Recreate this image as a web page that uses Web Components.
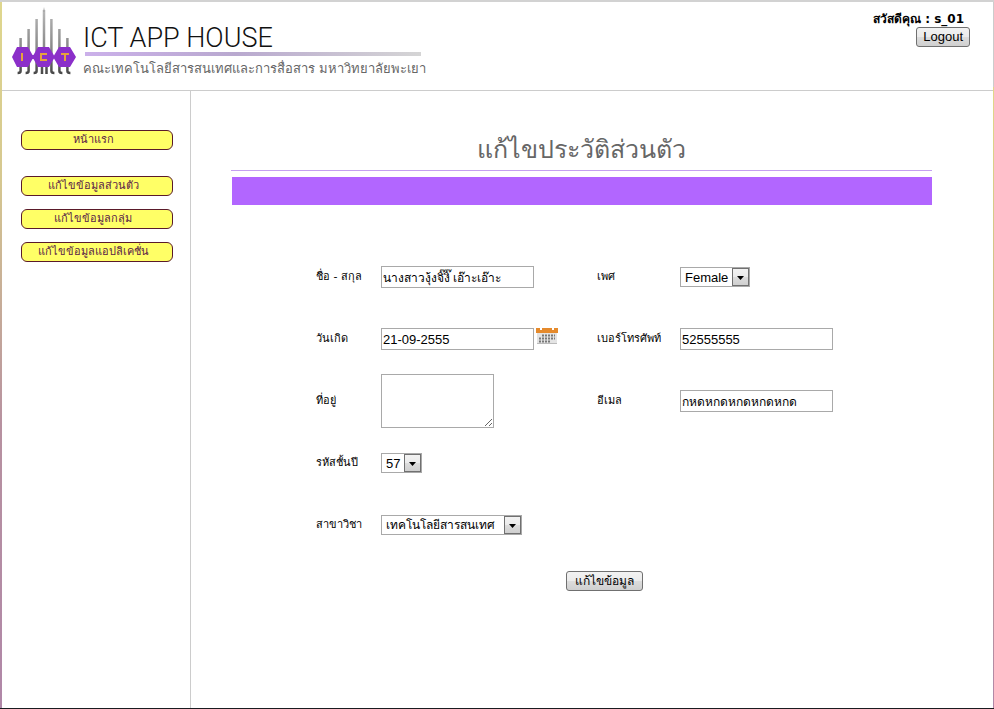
<!DOCTYPE html>
<html lang="th">
<head>
<meta charset="utf-8">
<title>ICT App House</title>
<style>
body { margin: 0; background: #fff; color: #000; font-family: "DejaVu Sans", sans-serif; font-size: 11px; }
</style>
</head>
<body>
<app-shell>
  <site-header slot="header" user="s_01"></site-header>
  <side-nav slot="nav">
    <nav-item class="home">หน้าแรก</nav-item>
    <nav-item>แก้ไขข้อมูลส่วนตัว</nav-item>
    <nav-item>แก้ไขข้อมูลกลุ่ม</nav-item>
    <nav-item>แก้ไขข้อมูลแอปลิเคชั่น</nav-item>
  </side-nav>
  <page-title>แก้ไขประวัติส่วนตัว</page-title>
  <profile-form></profile-form>
</app-shell>

<script>
const define = (name, html, setup) => customElements.define(name, class extends HTMLElement {
  constructor() {
    super();
    this.attachShadow({ mode: 'open' }).innerHTML = html;
  }
  connectedCallback() { if (setup) setup(this, this.shadowRoot); }
});

define('app-shell', `
<style>
  :host { display: flex; flex-direction: column; box-sizing: border-box; min-height: 100vh; position: relative;
    border-top: 2px solid #d2d2d2; border-bottom: 1px solid #1a1c20; }
  .body { display: flex; flex: 1; }
  aside { flex: 0 0 190px; box-sizing: border-box; border-right: 1px solid #ccc; margin-left: 1px; }
  main { flex: 1; min-width: 0; padding: 39px 62px 0 40px; }
  .edge { position: absolute; top: 0; bottom: 0; width: 2px; }
  .left { left: 0; background: linear-gradient(#dfd78e, #d6c890 25%, #b791a0 60%, #b087a8); }
  .right { right: 0; width: 1px; background: linear-gradient(#ccc 12%, #e0d888 12%, #ccb888 50%, #b087a8); }
</style>
<slot name="header"></slot>
<div class="body">
  <aside><slot name="nav"></slot></aside>
  <main><slot></slot></main>
</div>
<div class="edge left"></div><div class="edge right"></div>`);

define('site-header', `
<style>
  :host { display: flex; justify-content: space-between; box-sizing: border-box; min-height: 89px;
    padding: 5px 24px 0 11px; border-bottom: 1px solid #ccc; }
  .brand { display: flex; gap: 7px; }
  .names { padding-top: 16px; }
  h1 { margin: 0; font: 300 27px/30px Roboto, sans-serif; color: #111; }
  .bar { height: 4px; width: 336px; margin: -1px 0 3px 2px; background: linear-gradient(90deg, #cbb0ea, #b9a9cf 45%, #d5d5d5); }
  p { margin: 0; font: 300 13px/20px "DejaVu Sans", sans-serif; color: #666; white-space: nowrap; }
  .account { display: flex; flex-direction: column; align-items: flex-end; padding-top: 5px; }
  strong { font-size: 12px; line-height: 14px; margin: 0 6px 1px 0; }
  button { font: 13px/16px "Liberation Sans", Arial, sans-serif; padding: 1px 6px; border: 1px solid #707070; border-radius: 3px;
    background: linear-gradient(#f2f2f2, #ebebeb 50%, #ddd 50%, #cfcfcf); color: #000; }
</style>
<div class="brand">
  <svg width="65" height="70" viewBox="0 0 65 70" aria-label="ICT">
    <defs><linearGradient id="s" gradientUnits="userSpaceOnUse" x1="0" y1="0" x2="0" y2="68"><stop offset="0" stop-color="#bbb"/><stop offset=".6" stop-color="#888"/><stop offset="1" stop-color="#444"/></linearGradient></defs>
    <g fill="none" stroke="url(#s)" stroke-width="2.500">
      <path d="M9.600 31V64q0 2-3 2M17.600 22V64q0 2-3 2M25.600 12V64q0 2-3 2"/>
      <path d="M40.400 12V64q0 2 3 2M48.400 22V64q0 2 3 2M56.400 31V64q0 2 3 2"/>
      <path d="M33 3V48M31 58V67M35.500 58V67"/>
    </g>
    <path fill="#aaa" d="M32 5L33 0L34 5Z"/>
    <path fill="#8b2fc9" d="M6 40H17L21.500 48H22.500L27 40H38L43 48.500 48 40H59L65 50 59 60H48L43 51.500 38 60H27L22.500 52H21.500L17 60H6L1 50Z"/>
    <g fill="none" stroke="#e6a33c" stroke-width="2"><path d="M11 46v8M36 47h-6v6h6M50 47h8M54 47v7"/></g>
  </svg>
  <div class="names">
    <h1>ICT APP HOUSE</h1>
    <div class="bar"></div>
    <p>คณะเทคโนโลยีสารสนเทศและการสื่อสาร มหาวิทยาลัยพะเยา</p>
  </div>
</div>
<div class="account">
  <strong>สวัสดีคุณ : <span></span></strong>
  <button type="button">Logout</button>
</div>`, (el, root) => { root.querySelector('span').textContent = el.getAttribute('user'); });

define('side-nav', `
<style>
  :host { display: block; }
  nav { display: flex; flex-direction: column; gap: 13px; padding: 39px 17px 0 20px; }
  ::slotted(.home) { margin-bottom: 13px; }
</style>
<nav><slot></slot></nav>`);

define('nav-item', `
<style>
  :host { display: block; }
  a { display: block; box-sizing: border-box; height: 20px; line-height: 17px; text-align: center; font-size: 11px; padding-right: 8px;
    border: 1px solid #5a1a2a; border-radius: 6px; background: #ffff66; color: #5a2348; text-decoration: none; white-space: nowrap; }
</style>
<a href="#"><slot></slot></a>`);

define('page-title', `
<style>
  :host { display: block; }
  h2 { margin: 0; font: 300 25px/40px "DejaVu Sans", sans-serif; color: #666; text-align: center; border-bottom: 1px solid #c4a0f0; }
  .band { height: 28px; margin: 6px 0 0 1px; background: #b266ff; }
</style>
<h2><slot></slot></h2><div class="band"></div>`);

define('form-field', `
<style>
  :host { display: grid; grid-template-columns: var(--label-width, 65px) auto; justify-content: start; align-items: center; }
  label { font-size: 11px; line-height: 16px; white-space: nowrap; }
  .control { display: flex; align-items: center; gap: 2px; }
  input, textarea, select { box-sizing: border-box; margin: 0; border: 1px solid #a9a9a9; border-radius: 0; background: #fff;
    color: #000; font: 13px "Liberation Sans", Arial, sans-serif; }
  :host([thai]) input, :host([thai]) select { font-size: 12px; }
  input { width: 153px; height: 22px; padding: 1px; }
  textarea { width: 113px; height: 54px; padding: 2px; display: block; }
  .select { display: grid; grid-template-columns: 1fr 18px; align-items: center; }
  select { grid-area: 1 / 1 / 2 / 3; height: 20px; padding: 0 20px 0 4px; appearance: none; }
  :host([thai]) select { padding-right: 26px; }
  .arrow { grid-area: 1 / 2; box-sizing: border-box; width: 17px; height: 18px; border: 1px solid #707070; pointer-events: none;
    background: linear-gradient(#f2f2f2, #ebebeb 50%, #ddd 50%, #cfcfcf); }
  .arrow svg { display: block; }
  .calendar { padding: 0; border: 0; background: none; align-self: flex-start; }
  .calendar svg { display: block; }
</style>
<label for="c"></label><div class="control"></div>`, (el, root) => {
  root.querySelector('label').textContent = el.getAttribute('label');
  const kind = el.getAttribute('kind') || 'text';
  const value = el.getAttribute('value') || '';
  const box = root.querySelector('.control');
  if (kind === 'select') {
    box.innerHTML = `<div class="select"><select id="c"><option></option></select><span class="arrow"><svg width="15" height="16" viewBox="0 0 15 16"><path d="M4 7h7l-3.500 4Z"/></svg></span></div>`;
    box.querySelector('option').textContent = value;
  } else if (kind === 'textarea') {
    box.innerHTML = `<textarea id="c"></textarea>`;
  } else {
    box.innerHTML = `<input id="c" type="text">`;
    box.querySelector('input').value = value;
  }
  if (kind === 'date') box.insertAdjacentHTML('beforeend', `<button class="calendar" type="button" aria-label="ปฏิทิน">
    <svg width="22" height="18" viewBox="0 0 22 18">
      <path d="M1 5h20v11H1Z" fill="#e4e4e4"/><path d="M1 15.500h20" stroke="#bbb"/>
      <path d="M0 0h22v5H0Z" fill="#e58a2c"/><path d="M5 0v2M17 0v2" stroke="#fff" stroke-width="2"/>
      <path d="M6 7.500h13M3 10.500h16M3 13.500h11" stroke="#777" stroke-width="2" stroke-dasharray="2 1"/>
    </svg></button>`);
});

define('profile-form', `
<style>
  :host { display: block; }
  form { padding: 41px 0 0 85px; }
  .fields { display: grid; grid-template-columns: 281px 1fr; grid-auto-rows: minmax(62px, auto); align-items: center; }
  .side { --label-width: 83px; }
  .wide { grid-column: 1 / -1; }
  .actions { padding: 15px 0 0 250px; }
  button { font: 12px/16px "Liberation Sans", Arial, sans-serif; padding: 1px 8px; border: 1px solid #707070; border-radius: 3px;
    background: linear-gradient(#f2f2f2, #ebebeb 50%, #ddd 50%, #cfcfcf); color: #000; }
</style>
<form>
  <div class="fields">
    <form-field thai label="ชื่อ - สกุล" value="นางสาวงุ้งจิ๊งิ๊ เอ๊าะเอ๊าะ"></form-field>
    <form-field class="side" label="เพศ" kind="select" value="Female"></form-field>
    <form-field label="วันเกิด" kind="date" value="21-09-2555"></form-field>
    <form-field class="side" label="เบอร์โทรศัพท์" value="52555555"></form-field>
    <form-field label="ที่อยู่" kind="textarea"></form-field>
    <form-field thai class="side" label="อีเมล" value="กหดหกดหกดหกดหกด"></form-field>
    <form-field class="wide" label="รหัสชั้นปี" kind="select" value="57"></form-field>
    <form-field thai class="wide" label="สาขาวิชา" kind="select" value="เทคโนโลยีสารสนเทศ"></form-field>
  </div>
  <div class="actions"><button type="button">แก้ไขข้อมูล</button></div>
</form>`);
</script>
</body>
</html>
